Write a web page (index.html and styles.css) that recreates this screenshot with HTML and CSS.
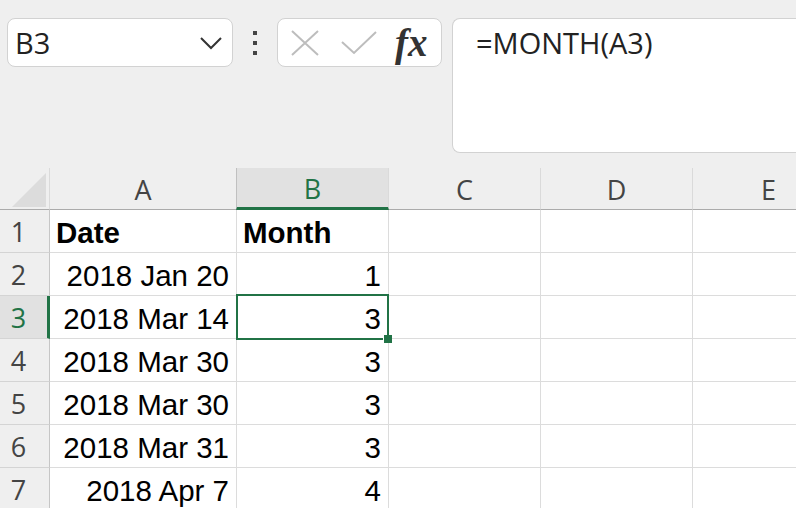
FILE: index.html
```html
<!DOCTYPE html>
<html lang="en">
<head>
    <meta charset="UTF-8">
    <title>Sheet - MONTH</title>
    <link rel="stylesheet" href="styles.css">
</head>
<body>
    <div class="toolbar">
        <div class="name-box">
            <span>B3</span>
            <svg class="chevron" width="24" height="14" viewBox="0 0 24 14">
                <path d="M2 2 L12 12 L22 2" fill="none" stroke="#333" stroke-width="2"/>
            </svg>
        </div>
        <div class="dots">
            <i></i><i></i><i></i>
        </div>
        <div class="fn-box">
            <svg width="28" height="26" viewBox="0 0 28 26">
                <path d="M1 1 L27 25 M27 1 L1 25" fill="none" stroke="#bdbdbd" stroke-width="2"/>
            </svg>
            <svg width="36" height="24" viewBox="0 0 36 24">
                <path d="M1 11 L13 22 L35 1" fill="none" stroke="#bdbdbd" stroke-width="2"/>
            </svg>
            <span class="fx">fx</span>
        </div>
        <div class="formula">=MONTH(A3)</div>
    </div>

    <div class="sheet">
        <div class="corner"><div class="tri"></div></div>
        <div class="col-head">A</div>
        <div class="col-head active">B</div>
        <div class="col-head">C</div>
        <div class="col-head">D</div>
        <div class="col-head">E</div>

        <div class="row-head">1</div>
        <div class="cell bold">Date</div>
        <div class="cell bold">Month</div>
        <div class="cell"></div>
        <div class="cell"></div>
        <div class="cell"></div>

        <div class="row-head">2</div>
        <div class="cell num">2018 Jan 20</div>
        <div class="cell num">1</div>
        <div class="cell"></div>
        <div class="cell"></div>
        <div class="cell"></div>

        <div class="row-head active">3</div>
        <div class="cell num">2018 Mar 14</div>
        <div class="cell num selected">3</div>
        <div class="cell"></div>
        <div class="cell"></div>
        <div class="cell"></div>

        <div class="row-head">4</div>
        <div class="cell num">2018 Mar 30</div>
        <div class="cell num">3</div>
        <div class="cell"></div>
        <div class="cell"></div>
        <div class="cell"></div>

        <div class="row-head">5</div>
        <div class="cell num">2018 Mar 30</div>
        <div class="cell num">3</div>
        <div class="cell"></div>
        <div class="cell"></div>
        <div class="cell"></div>

        <div class="row-head">6</div>
        <div class="cell num">2018 Mar 31</div>
        <div class="cell num">3</div>
        <div class="cell"></div>
        <div class="cell"></div>
        <div class="cell"></div>

        <div class="row-head">7</div>
        <div class="cell num">2018 Apr 7</div>
        <div class="cell num">4</div>
        <div class="cell"></div>
        <div class="cell"></div>
        <div class="cell"></div>
    </div>
</body>
</html>
```

FILE: styles.css
```css
body {
    margin: 0;
    background: #efefef;
    overflow: hidden;
    width: 796px;
    height: 508px;
}

.toolbar {
    display: flex;
    align-items: flex-start;
    padding: 18px 0 0 7px;
    height: 150px;
    font-family: 'Open Sans', sans-serif;
    color: #222;
}

.name-box {
    box-sizing: border-box;
    width: 226px;
    height: 49px;
    background: #fff;
    border: 1px solid #d2d2d2;
    border-radius: 8px;
    display: flex;
    align-items: center;
    justify-content: space-between;
    padding: 0 9px 0 7px;
    font-size: 29px;
}

.dots {
    display: flex;
    flex-direction: column;
    gap: 6px;
    margin: 13px 20px 0 20px;
}

.dots i {
    display: block;
    width: 4px;
    height: 4px;
    background: #444;
}

.fn-box {
    box-sizing: border-box;
    width: 165px;
    height: 49px;
    background: #fff;
    border: 1px solid #d2d2d2;
    border-radius: 8px;
    display: flex;
    align-items: center;
    padding: 0 0 0 13px;
    gap: 22px;
}

.fx {
    font-family: 'Liberation Serif', serif;
    font-style: italic;
    font-weight: bold;
    font-size: 39px;
    line-height: 40px;
    color: #333;
    margin-left: -4px;
}

.formula {
    box-sizing: border-box;
    margin-left: 10px;
    flex: 1;
    height: 135px;
    background: #fff;
    border: 1px solid #d2d2d2;
    border-right: none;
    border-radius: 8px 0 0 8px;
    padding: 4px 0 0 23px;
    font-size: 29px;
    line-height: 40px;
}

.sheet {
    display: grid;
    grid-template-columns: 50px 187px 152px 152px 152px 152px;
    grid-template-rows: 42px repeat(7, 43px);
    width: 796px;
    overflow: hidden;
}

.corner {
    position: relative;
    border-right: 1px solid #dadada;
    border-bottom: 1px solid #ababab;
}

.tri {
    position: absolute;
    left: 12px;
    top: 5px;
    width: 34px;
    height: 34px;
    background: #dcdcdc;
    clip-path: polygon(100% 0, 100% 100%, 0 100%);
}

.col-head {
    box-sizing: border-box;
    border-right: 1px solid #dadada;
    border-bottom: 1px solid #ababab;
    text-align: center;
    font-family: 'Open Sans', sans-serif;
    font-size: 27px;
    line-height: 44px;
    color: #444;
}

.col-head.active {
    background: #e1e1e1;
    color: #217346;
    border-left: 1px solid #c0c0c0;
    margin-left: -1px;
    border-bottom: 3px solid #217346;
    line-height: 42px;
}

.row-head {
    box-sizing: border-box;
    border-right: 1px solid #c6c6c6;
    border-bottom: 1px solid #d4d4d4;
    padding-right: 12px;
    text-align: center;
    font-family: 'Open Sans', sans-serif;
    font-size: 27px;
    line-height: 44px;
    color: #444;
}

.row-head.active {
    background: #e1e1e1;
    color: #217346;
    border-right: 3px solid #217346;
    padding-right: 10px;
}

.cell {
    box-sizing: border-box;
    background: #fff;
    border-right: 1px solid #dcdcdc;
    border-bottom: 1px solid #dcdcdc;
    font-family: 'Liberation Sans', Arial, sans-serif;
    font-size: 29.5px;
    line-height: 46px;
    color: #000;
    padding: 0 7px 0 6px;
    white-space: nowrap;
}

.cell.bold {
    font-weight: bold;
}

.cell.num {
    text-align: right;
}

.cell.selected {
    position: relative;
}

.cell.selected::after {
    content: "";
    position: absolute;
    left: -1px;
    top: -2px;
    right: -1px;
    bottom: -2px;
    border: 2px solid #217346;
}

.cell.selected::before {
    content: "";
    position: absolute;
    right: -4px;
    bottom: -5px;
    width: 8px;
    height: 8px;
    background: #217346;
    border-left: 1px solid #fff;
    z-index: 2;
}
```
